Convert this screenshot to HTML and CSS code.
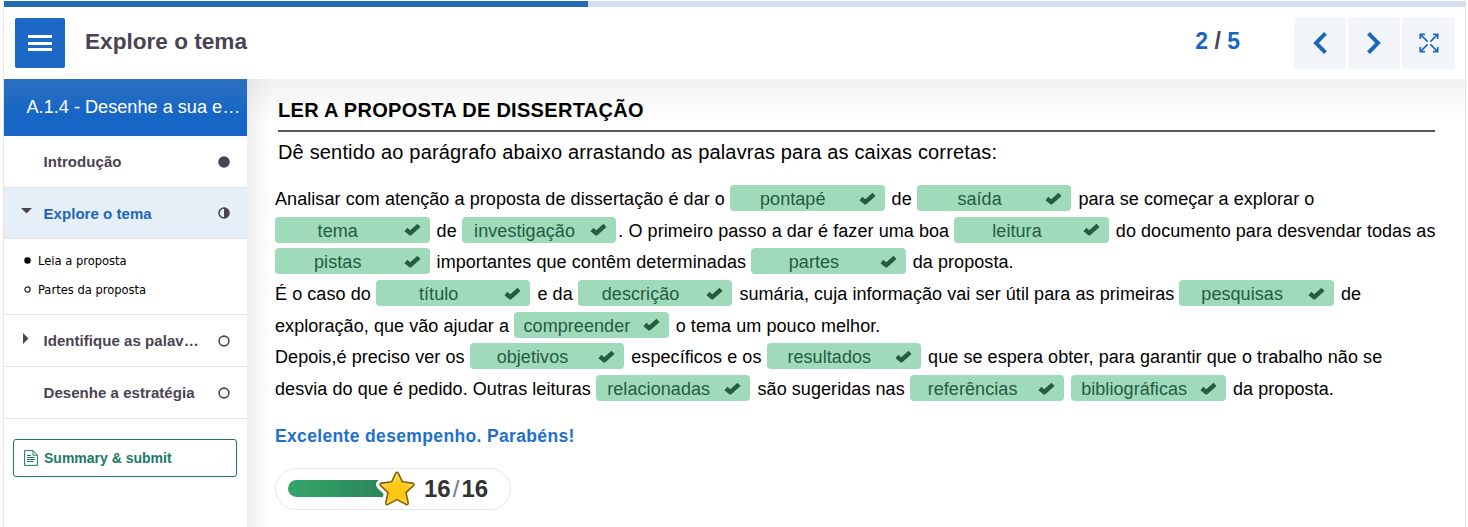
FILE: index.html
```html
<!DOCTYPE html>
<html lang="pt">
<head>
<meta charset="utf-8">
<title>Explore o tema</title>
<link rel="stylesheet" href="styles.css">
</head>
<body>
<svg class="defs" width="0" height="0"><defs>
<symbol id="check" viewBox="0 0 17 13"><path d="M1.9 6.6 6.4 10.2 15 2.4" fill="none" stroke="#255c41" stroke-width="4.5" stroke-linejoin="round"/></symbol>
</defs></svg>
<div class="book">
  <div class="progress"><div class="progress-fill"></div></div>
  <header class="top">
    <div class="menu"><i></i><i></i><i></i></div>
    <h1 class="title">Explore o tema</h1>
    <div class="pages">2 <span>/</span> 5</div>
    <div class="nav">
      <div class="nav-btn"><svg width="14" height="22" viewBox="0 0 14 22"><path d="M12.5 1.4 3 11l9.5 9.6" fill="none" stroke="#1c66bd" stroke-width="4"/></svg></div>
      <div class="nav-btn"><svg width="14" height="22" viewBox="0 0 14 22"><path d="M1.5 1.4 11 11l-9.5 9.6" fill="none" stroke="#1c66bd" stroke-width="4"/></svg></div>
      <div class="nav-btn full"><svg width="20" height="20" viewBox="0 0 20 20" fill="none" stroke="#1c66bd" stroke-width="1.7"><path d="M1.3 6V1.3H6M14 1.3h4.7V6M18.7 14v4.7H14M6 18.7H1.3V14"/><path d="m2 2 6.6 6.6M18 2l-6.6 6.6M18 18l-6.6-6.6M2 18l6.6-6.6"/></svg></div>
    </div>
  </header>
  <div class="main">
    <aside class="side">
      <div class="course">A.1.4 - Desenhe a sua e…</div>
      <div class="item"><span class="arrow"></span><span class="name">Introdução</span><svg width="12" height="12" viewBox="0 0 12 12"><circle cx="6" cy="6" r="5.8" fill="#4a4353"/></svg></div>
      <div class="item active"><span class="arrow"><svg width="11" height="6" viewBox="0 0 11 6"><path d="M0 0h11L5.5 5.5Z"/></svg></span><span class="name">Explore o tema</span><svg width="12" height="12" viewBox="0 0 12 12"><circle cx="6" cy="6" r="5" fill="none" stroke="#4a4353" stroke-width="1.6"/><path d="M6 1a5 5 0 0 1 0 10Z" fill="#4a4353"/></svg></div>
      <div class="sub">
        <div class="leaf"><svg width="7" height="7" viewBox="0 0 7 7"><circle cx="3.5" cy="3.5" r="3.2"/></svg><span>Leia a proposta</span></div>
        <div class="leaf"><svg width="7" height="7" viewBox="0 0 7 7"><circle cx="3.5" cy="3.5" r="2.6" fill="none" stroke="#222" stroke-width="1.2"/></svg><span>Partes da proposta</span></div>
      </div>
      <div class="item"><span class="arrow side-arrow"><svg width="6" height="11" viewBox="0 0 6 11"><path d="M0 0 5.5 5.5 0 11Z"/></svg></span><span class="name">Identifique as palav…</span><svg width="12" height="12" viewBox="0 0 12 12"><circle cx="6" cy="6" r="4.9" fill="none" stroke="#4a4353" stroke-width="1.6"/></svg></div>
      <div class="item"><span class="arrow"></span><span class="name">Desenhe a estratégia</span><svg width="12" height="12" viewBox="0 0 12 12"><circle cx="6" cy="6" r="4.9" fill="none" stroke="#4a4353" stroke-width="1.6"/></svg></div>
      <div class="submit"><svg width="14" height="16" viewBox="0 0 14 16" fill="none" stroke="#1b7968"><path d="M9 .6H.6v14.8h12.8V5.2L9 .6v4.6h4.4"/><path d="M3 5.5h4M3 7.5h7.5M3 9.5h8M3 11.5h6.5"/></svg><span>Summary &amp; submit</span></div>
    </aside>
    <main class="content">
      <h2 class="heading"><span>LER A PROPOSTA DE DISSERTAÇÃO</span></h2>
      <p class="task">Dê sentido ao parágrafo abaixo arrastando as palavras para as caixas corretas:</p>
      <div class="text">
        <div class="line">Analisar com atenção a proposta de dissertação é dar o <span class="chip"><b>pontapé</b><svg><use href="#check"/></svg></span> de <span class="chip"><b>saída</b><svg><use href="#check"/></svg></span> para se começar a explorar o</div>
        <div class="line"><span class="chip"><b>tema</b><svg><use href="#check"/></svg></span> de <span class="chip"><b>investigação</b><svg><use href="#check"/></svg></span>. O primeiro passo a dar é fazer uma boa <span class="chip"><b>leitura</b><svg><use href="#check"/></svg></span> do documento para desvendar todas as</div>
        <div class="line"><span class="chip"><b>pistas</b><svg><use href="#check"/></svg></span> importantes que contêm determinadas <span class="chip"><b>partes</b><svg><use href="#check"/></svg></span> da proposta.</div>
        <div class="line">É o caso do <span class="chip"><b>título</b><svg><use href="#check"/></svg></span> e da <span class="chip"><b>descrição</b><svg><use href="#check"/></svg></span> sumária, cuja informação vai ser útil para as primeiras <span class="chip"><b>pesquisas</b><svg><use href="#check"/></svg></span> de</div>
        <div class="line">exploração, que vão ajudar a <span class="chip"><b>compreender</b><svg><use href="#check"/></svg></span> o tema um pouco melhor.</div>
        <div class="line">Depois,é preciso ver os <span class="chip"><b>objetivos</b><svg><use href="#check"/></svg></span> específicos e os <span class="chip"><b>resultados</b><svg><use href="#check"/></svg></span> que se espera obter, para garantir que o trabalho não se</div>
        <div class="line">desvia do que é pedido. Outras leituras <span class="chip"><b>relacionadas</b><svg><use href="#check"/></svg></span> são sugeridas nas <span class="chip"><b>referências</b><svg><use href="#check"/></svg></span> <span class="chip"><b>bibliográficas</b><svg><use href="#check"/></svg></span> da proposta.</div>
      </div>
      <p class="feedback">Excelente desempenho. Parabéns!</p>
      <div class="score">
        <div class="bar"></div>
        <svg class="star" width="42" height="40" viewBox="0 0 42 40"><defs><radialGradient id="gold" cx=".5" cy=".6" r=".55"><stop offset="0" stop-color="#ffc20e"/><stop offset=".5" stop-color="#fccb1b"/><stop offset="1" stop-color="#ffe063"/></radialGradient><path id="star" d="M19.8 4.2Q21 2.4 22.2 4.2L26.4 12.8 36.3 14.1Q39 14.8 37.4 16.6L30 23.6 32.2 33.6Q32.4 36.4 30 35.4L21 30.6 12 35.4Q9.6 36.4 9.8 33.6L12 23.6 4.6 16.6Q3 14.8 5.7 14.1L15.6 12.8Z" stroke-linejoin="round"/></defs><use href="#star" fill="none" stroke="#fff" stroke-width="8"/><use href="#star" fill="url(#gold)" stroke="#8a5d0b" stroke-width="1.6"/></svg>
        <div class="points">16<span>/</span>16</div>
      </div>
    </main>
  </div>
</div>
</body>
</html>
```
FILE: styles.css
```css
* { box-sizing: border-box; }
body { margin: 0; background: #fff; font-family: "Liberation Sans", Arial, sans-serif; color: #000; overflow: hidden; }
.defs { display: block; }
.book { margin: 0 2px 0 3px; height: 527px; border-left: 1px solid #e8e8e8; border-right: 1px solid #e5e5e5; padding-top: 1px; display: flex; flex-direction: column; }
.progress { height: 6px; background: #d3dfee; }
.progress-fill { width: 584px; height: 6px; background: #236bb9; }
.top { height: 72px; display: flex; align-items: center; padding: 0 10px 0 11px; }
.menu { width: 50px; height: 50px; background: #1b68c5; border-radius: 2px; display: flex; flex-direction: column; align-items: center; justify-content: center; gap: 3.5px; }
.menu i { width: 24px; height: 3px; background: #fff; }
.title { margin: 0 auto 2px 20px; font-size: 22.6px; color: #4a4353; white-space: nowrap; }
.pages { font-size: 23px; font-weight: bold; color: #1c66bd; margin: 0 54px 4px 0; }
.pages span { color: #4a4353; }
.nav { display: flex; gap: 2px; }
.nav-btn { width: 52px; height: 52px; border-radius: 3px; background: #f2f6fb; display: flex; align-items: center; justify-content: center; }
.nav-btn.full { width: 53px; }
.main { flex: 1; display: flex; min-height: 0; }
.side { flex: none; width: 243px; }
.course { height: 57px; line-height: 57px; padding-left: 22.5px; background: linear-gradient(#2a70bf, #1766c6 60%); color: #fff; font-size: 18.15px; white-space: nowrap; }
.item { height: 52px; border-bottom: 1px solid #e4e5ec; display: flex; align-items: center; padding-right: 17px; font-size: 15px; font-weight: bold; color: #4a4353; }
.item .name { flex: 1; white-space: nowrap; letter-spacing: .05px; }
.arrow { width: 39.5px; padding-left: 17px; display: flex; margin-top: -4px; fill: #4a4353; }
.side-arrow { padding-left: 19px; }
.item.active { background: #e6eef8; height: 51px; }
.active .name { color: #1c66bd; }
.sub { height: 76px; border-bottom: 1px solid #e4e5ec; padding-top: 7px; }
.leaf { height: 29px; display: flex; align-items: center; gap: 7px; padding-left: 20px; font: 12.8px "DejaVu Sans Condensed", "DejaVu Sans", sans-serif; font-stretch: condensed; }
.submit { margin: 20px 10px 0 9px; height: 38px; border: 1px solid #1b7968; border-radius: 3px; display: flex; align-items: center; gap: 6px; padding-left: 10px; color: #1b7968; font-size: 14px; font-weight: bold; }
.content { flex: 1; min-width: 0; padding: 16px 30px 0 28px; background: linear-gradient(to right, rgba(0,0,0,.06), rgba(0,0,0,0) 26px), linear-gradient(rgba(0,0,0,.055), rgba(0,0,0,0) 42px); }
.heading { margin: 0 0 0 3px; height: 37px; border-bottom: 2px solid #58585a; font-size: 20px; line-height: 30px; letter-spacing: .3px; white-space: nowrap; }
.task { margin: 5px 0 17px 3px; font-size: 20px; line-height: 30px; letter-spacing: .17px; white-space: nowrap; }
.text { font-size: 18px; letter-spacing: .068px; }
.line { height: 31.7px; line-height: 31.7px; white-space: nowrap; }
.chip { display: inline-flex; align-items: center; width: 154.5px; height: 26px; border-radius: 4px; background: #9fdabb; margin: 0 2px 0 0; padding: 0 9px 0 0; line-height: 26px; color: #255c41; }
.chip b { flex: 1; font-weight: normal; text-align: center; padding: 2px 3px 0 0; }
.chip svg { width: 17px; height: 13px; }
.feedback { margin: 18px 0 0; font-size: 17.5px; line-height: 24px; letter-spacing: .35px; font-weight: bold; color: #1f70ce; }
.score { margin-top: 20px; width: 236px; height: 42px; border: 1px solid #e6e7e9; border-radius: 21px; background: #fff; display: flex; align-items: center; padding-left: 12px; }
.bar { width: 106px; height: 17px; border-radius: 9px; background: linear-gradient(to right, #34a66b, #2b875a 85%); }
.star { margin-left: -18px; }
.points { margin-left: 6px; font-size: 24px; font-weight: bold; color: #333; }
.points span { font-weight: normal; color: #777; padding: 0 2px; }
```
